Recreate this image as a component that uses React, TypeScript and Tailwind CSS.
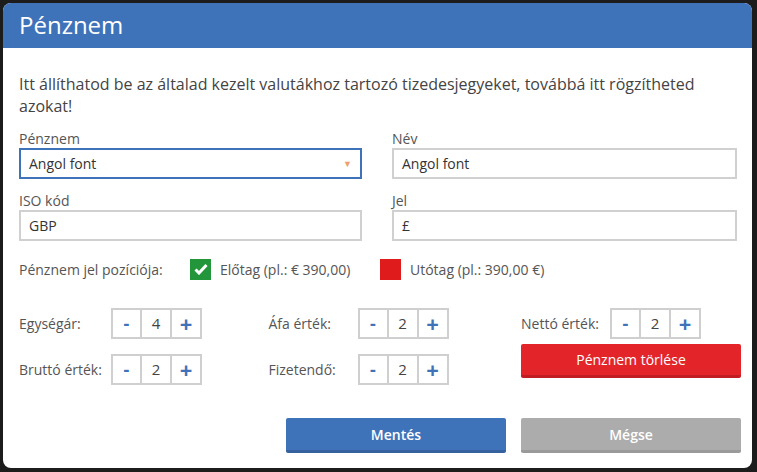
import React from "react";

const Stepper = ({ v }: { v: string }) => (
  <div className="flex h-[31px] border-2 border-[#cfcfcf] bg-white">
    <div className="w-[29px] flex items-center justify-center text-[#3f73b9] font-bold text-[18px] border-r-2 border-[#cfcfcf]">-</div>
    <div className="w-[30px] flex items-center justify-center text-[#444] text-[15px] border-r-2 border-[#cfcfcf]">{v}</div>
    <div className="w-[28px] flex items-center justify-center text-[#3f73b9] font-bold text-[22px]">+</div>
  </div>
);

const Field = ({ label, value, focus, arrow }: { label: string; value: string; focus?: boolean; arrow?: boolean }) => (
  <div className="flex flex-col">
    <div className="text-[14px] text-[#555] leading-[20px] h-[19px]">{label}</div>
    <div className={`h-[31px] flex items-center justify-between px-[8px] text-[14px] text-[#333] border-2 ${focus ? "border-[#3f73b9]" : "border-[#d0d0d0]"}`}>
      <span>{value}</span>
      {arrow && <span className="text-[#f0a070] text-[9px]">▼</span>}
    </div>
  </div>
);

export default function App() {
  return (
    <div className="w-[757px] h-[472px] bg-[#1c1c1c] p-[3px] pr-[5px] pb-[4px]" style={{ fontFamily: "'Open Sans', sans-serif" }}>
      <div className="w-full h-full bg-white rounded-[8px] overflow-hidden flex flex-col">
        <div className="h-[45px] bg-[#3f73b9] text-white text-[24px] flex items-center px-[16px] pb-[2px]">Pénznem</div>
        <div className="pl-[16px] pr-[11px] pt-[25px] flex flex-col">
          <p className="text-[16px] leading-[22px] text-[#444]">Itt állíthatod be az általad kezelt valutákhoz tartozó tizedesjegyeket, továbbá itt rögzítheted azokat!</p>
          <div className="grid grid-cols-[343px_345px] gap-x-[30px] gap-y-[12px] mt-[12px]">
            <Field label="Pénznem" value="Angol font" focus arrow />
            <Field label="Név" value="Angol font" />
            <Field label="ISO kód" value="GBP" />
            <Field label="Jel" value="£" />
          </div>
          <div className="flex items-center mt-[17px] h-[22px] text-[14px] text-[#555]">
            <span className="w-[171px]">Pénznem jel pozíciója:</span>
            <div className="w-[21px] h-[21px] bg-[#23963c] flex items-center justify-center">
              <svg width="14" height="12" viewBox="0 0 14 12"><path d="M1.5 6.5l3.5 3.5 7.5-8" stroke="white" strokeWidth="3" fill="none" /></svg>
            </div>
            <span className="ml-[9px] w-[160px]">Előtag (pl.: € 390,00)</span>
            <div className="w-[21px] h-[21px] bg-[#e01b1b]" />
            <span className="ml-[9px]">Utótag (pl.: 390,00 €)</span>
          </div>
          <div className="flex mt-[28px] text-[14px] text-[#555]">
            <div className="w-[250px] flex flex-col gap-[15px]">
              <div className="flex items-center"><span className="w-[92px]">Egységár:</span><Stepper v="4" /></div>
              <div className="flex items-center"><span className="w-[92px]">Bruttó érték:</span><Stepper v="2" /></div>
            </div>
            <div className="w-[253px] flex flex-col gap-[15px]">
              <div className="flex items-center"><span className="w-[89px]">Áfa érték:</span><Stepper v="2" /></div>
              <div className="flex items-center"><span className="w-[89px]">Fizetendő:</span><Stepper v="2" /></div>
            </div>
            <div className="flex flex-col">
              <div className="flex items-center"><span className="w-[89px]">Nettó érték:</span><Stepper v="2" /></div>
              <button className="mt-[5px] w-[220px] h-[34px] bg-[#e3252a] border-b-[3px] border-[#c01e22] text-white text-[14px] rounded-[2px]">Pénznem törlése</button>
            </div>
          </div>
          <div className="flex justify-end gap-[15px] mt-[33px]">
            <button className="w-[220px] h-[35px] bg-[#3f73b9] border-b-[3px] border-[#35629f] text-white text-[14px] font-semibold rounded-[2px]">Mentés</button>
            <button className="w-[220px] h-[35px] bg-[#acacac] border-b-[3px] border-[#9a9a9a] text-white text-[14px] font-semibold rounded-[2px]">Mégse</button>
          </div>
        </div>
      </div>
    </div>
  );
}
